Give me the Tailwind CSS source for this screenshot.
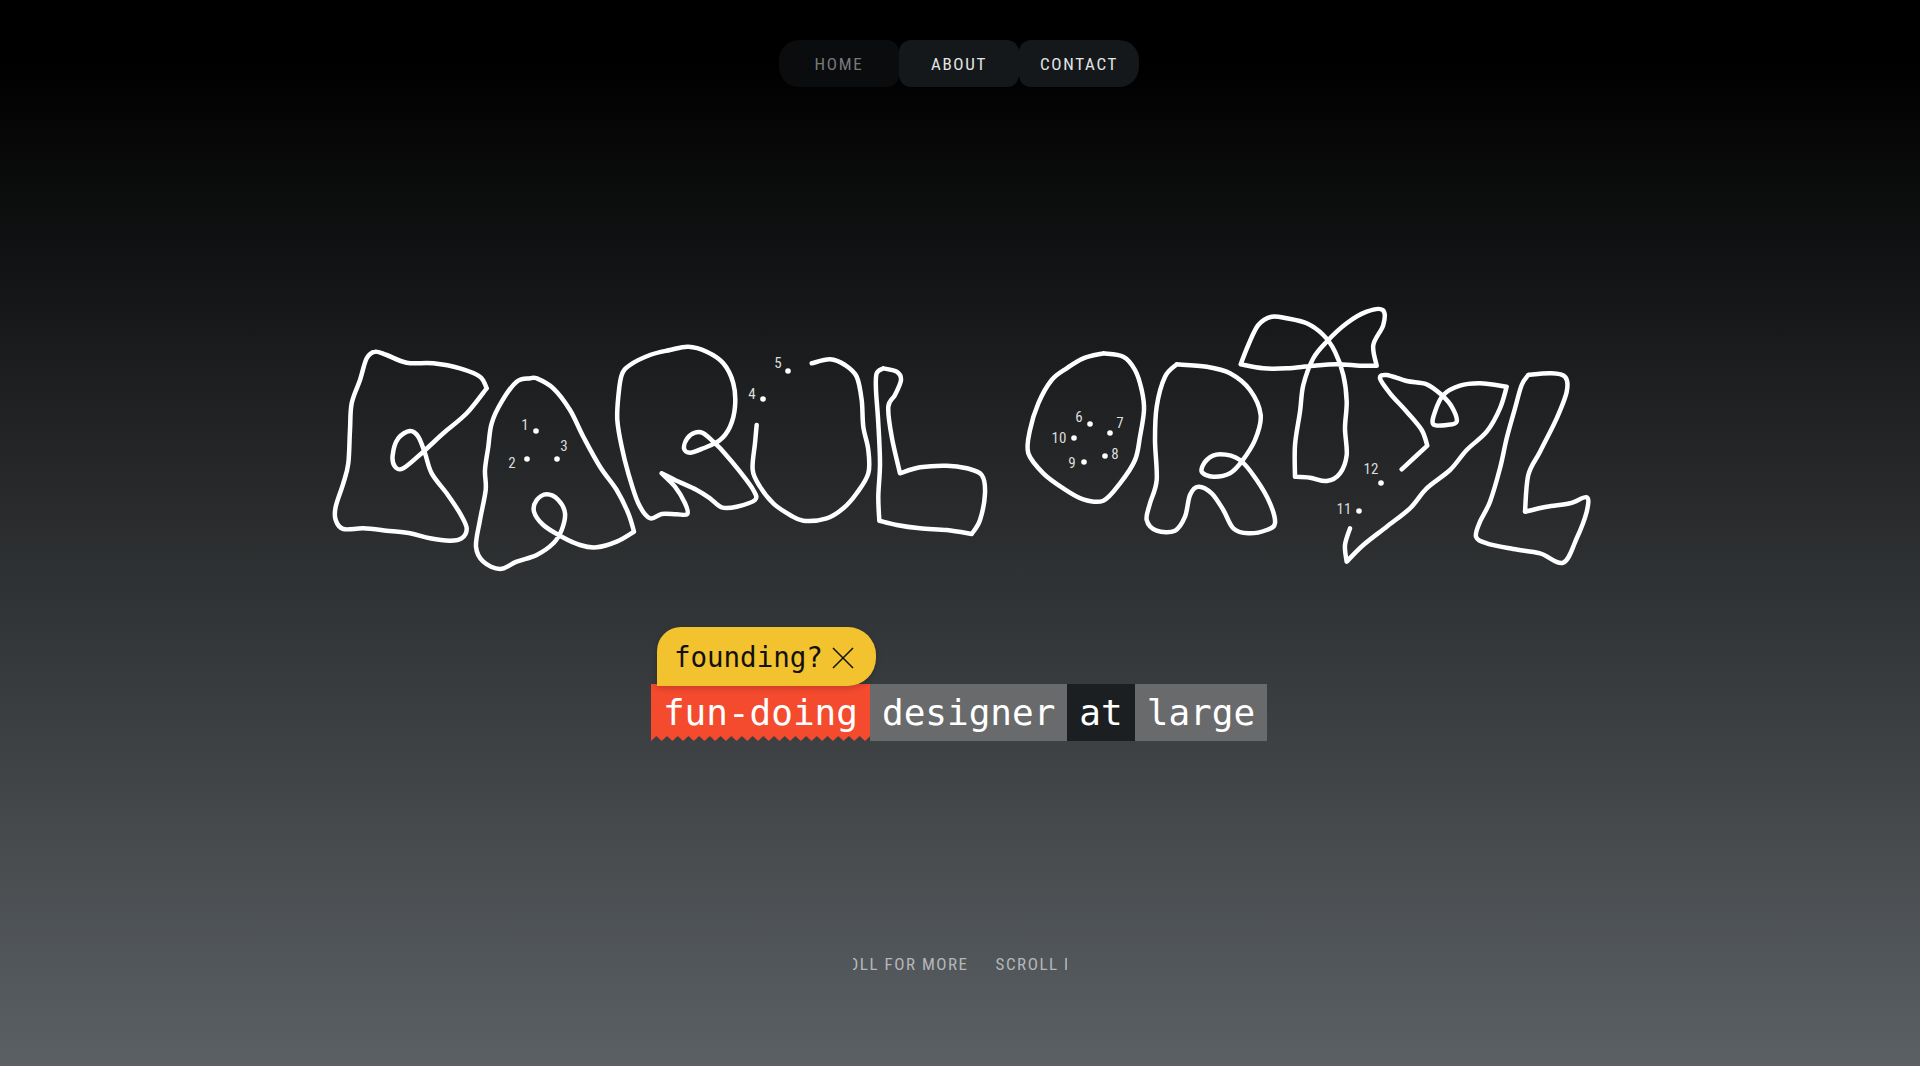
<!DOCTYPE html>
<html lang="en">
<head>
    <meta charset="UTF-8">
    <title>Karol Ortyl</title>
    <script src="https://cdn.jsdelivr.net/npm/@tailwindcss/browser@4"></script>
</head>
<body class="bg-black">
    <div class="relative h-[1066px] overflow-hidden bg-[linear-gradient(to_bottom,#000_6%,#5b6064_100%)] font-['Roboto',sans-serif]">
        <!-- nav -->
        <nav class="flex justify-center pr-[2px] pt-10 text-[17px] tracking-[0.1em] [font-stretch:75%]">
            <a class="flex h-[47px] w-[120px] items-center justify-center rounded-l-[20px] rounded-r-[12px] bg-[#0a0c0e] pt-[2px] text-[#77797b]">HOME</a>
            <a class="flex h-[47px] w-[120px] items-center justify-center rounded-[12px] bg-[#14181a] pt-[2px] text-[#e4e5e6]">ABOUT</a>
            <a class="flex h-[47px] w-[120px] items-center justify-center rounded-l-[12px] rounded-r-[20px] bg-[#14181a] pt-[2px] text-[#e4e5e6]">CONTACT</a>
        </nav>

        <!-- hand drawn name -->
        <svg id="signature" class="absolute left-0 top-0" width="1920" height="1066" fill="none"></svg>

        <!-- tagline -->
        <div class="absolute left-0 right-0 top-[627px] flex justify-center pr-[2px] font-['DejaVu_Sans_Mono',monospace]">
            <div class="relative pt-[57px]">
                <div class="absolute left-[6px] top-0 z-10 flex h-[59px] w-[219px] items-center gap-[9px] rounded-tl-[24px] rounded-r-[28px] bg-[#f3c22f] pl-[17px] pt-[2px] text-[27.5px] text-[#111] shadow-[0_2px_6px_rgba(0,0,0,0.2)]">
                    <span>founding?</span>
                    <svg width="22" height="22" viewBox="0 0 22 22" fill="none" stroke="#111" stroke-width="1.5"><path d="M1 1 21 21M21 1 1 21"/></svg>
                </div>
                <div class="flex text-[36px] leading-[57px] text-white">
                    <span class="relative bg-[#f44a2e] px-3">fun-doing
                        <svg class="absolute bottom-0 left-0 h-[5px] w-full" fill="none">
                            <pattern id="teeth" width="10.7" height="5" patternUnits="userSpaceOnUse"><path d="M0 5 5.35 0 10.7 5Z" fill="#3b3f42"/></pattern>
                            <rect width="100%" height="5" fill="url(#teeth)"/>
                        </svg>
                    </span>
                    <span class="bg-[#696a6b] px-3">designer</span>
                    <span class="bg-[#1c1f22] px-3">at</span>
                    <span class="bg-[#696a6b] px-3">large</span>
                </div>
            </div>
        </div>

        <!-- ticker -->
        <div class="absolute left-[853px] top-[954px] w-[214px] overflow-hidden text-[17px] leading-5 tracking-[0.09em] text-[#b4b7b9] [font-stretch:75%]">
            <div class="ml-[-37px] flex w-max gap-[27px] whitespace-nowrap">
                <span>SCROLL FOR MORE</span>
                <span>SCROLL FOR MORE</span>
            </div>
        </div>
    </div>

    <script>
        const NS = 'http://www.w3.org/2000/svg';
        const svg = document.getElementById('signature');

        // strokes traced from the drawing: [originX, originY, points at 3x]
        // a point written twice makes a hard corner
        const strokes = [
            [320, 330, [500,175,440,250,370,310,310,365,250,415,225,410,218,375,235,325,270,303,295,320,315,370,335,430,380,490,420,550,440,595,425,625,390,632,330,625,270,610,200,602,130,595,70,597,47,570,47,530,70,460,85,400,90,300,95,220,120,150,140,85,165,65,200,75,260,98,340,100,420,115,480,140,500,175]],
            [320, 330, [630,145,590,155,545,215,515,280,505,350,495,420,497,480,480,570,468,650,490,695,540,717,590,695,650,675,700,640,725,600,735,550,715,510,680,493,650,510,642,545,670,585,725,620,780,645,830,652,890,635,942,605,942,605,925,550,890,480,840,410,790,320,750,240,700,175,650,145,630,145]],
            [600, 330, [185,430,225,450,290,480,330,505,365,532,410,530,465,510,460,480,420,425,370,365,345,340,310,310,285,308,262,325,252,355,270,368,310,355,360,330,390,290,405,230,400,160,370,100,320,65,265,50,210,60,150,75,90,105,65,135,55,200,52,270,65,350,85,430,115,520,150,565,185,552,230,553,262,552,255,520,225,470,185,430]],
            [600, 330, [470,285,465,340,458,420,480,470,520,520,570,555,610,572,680,565,730,535,770,490,805,430,805,360,790,290,785,210,770,140,735,105,690,88,635,100]],
            [600, 330, [850,115,890,125,903,150,885,195,865,230,875,320,900,430,900,430,960,412,1040,407,1100,415,1145,435,1155,490,1140,570,1115,612,1115,612,1040,600,960,595,890,585,838,572,838,572,835,500,840,400,835,280,828,180,830,130,850,115]],
            [1010, 340, [280,40,340,50,375,90,395,150,402,210,390,290,375,360,330,430,280,482,220,478,160,445,100,400,55,340,60,270,85,190,125,120,170,85,220,55,280,40]],
            [1010, 340, [500,73,590,80,660,100,720,150,752,225,735,300,695,365,660,400,610,410,575,395,590,360,630,343,690,360,740,420,780,490,795,550,770,570,715,580,670,565,640,510,605,460,565,440,540,465,525,530,495,572,440,572,410,540,420,490,440,420,435,300,440,200,465,110,500,73]],
            [1220, 295, [470,212,460,150,490,90,488,45,440,50,380,85,320,140,280,190,250,270,240,350,225,450,225,545,225,545,270,548,320,558,360,535,380,480,375,400,380,320,370,240,345,170,310,120,260,85,200,70,155,65,115,90,85,150,62,208,62,208,130,220,200,220,280,212,350,208,420,212,470,212]],
            [1220, 295, [545,523,622,452,622,452,605,405,560,350,510,295,480,250,500,240,560,258,620,268,665,300,695,335,710,380,680,390,640,388,645,350,670,300,720,272,780,265,860,275,860,275,840,340,800,410,740,465,690,525,620,580,570,640,500,695,430,750,380,800,380,800,375,750,390,700]],
            [1220, 295, [925,240,990,235,1035,245,1040,290,1010,370,960,470,925,540,915,650,915,650,980,635,1050,625,1100,607,1100,650,1070,730,1030,803,960,775,880,762,800,745,768,725,780,680,810,620,840,520,860,430,885,340,905,270,925,240]]
        ];

        // catmull-rom through the traced points
        function smooth(pts) {
            let d = `M${pts[0].x} ${pts[0].y}`;
            for (let i = 0; i < pts.length - 1; i++) {
                const p0 = pts[i - 1] || pts[i], p1 = pts[i], p2 = pts[i + 1], p3 = pts[i + 2] || p2;
                if (p1.x === p2.x && p1.y === p2.y) continue;
                const c1x = p1.x + (p2.x - p0.x) / 6, c1y = p1.y + (p2.y - p0.y) / 6;
                const c2x = p2.x - (p3.x - p1.x) / 6, c2y = p2.y - (p3.y - p1.y) / 6;
                d += `C${c1x.toFixed(1)} ${c1y.toFixed(1)} ${c2x.toFixed(1)} ${c2y.toFixed(1)} ${p2.x.toFixed(1)} ${p2.y.toFixed(1)}`;
            }
            return d;
        }

        strokes.forEach(([ox, oy, raw]) => {
            const pts = [];
            for (let i = 0; i < raw.length; i += 2) pts.push({ x: ox + raw[i] / 3, y: oy + raw[i + 1] / 3 });
            const path = document.createElementNS(NS, 'path');
            path.setAttribute('d', smooth(pts));
            path.setAttribute('stroke', '#fff');
            path.setAttribute('stroke-width', '4.5');
            path.setAttribute('stroke-linecap', 'round');
            path.setAttribute('stroke-linejoin', 'round');
            svg.appendChild(path);
        });

        // numbered dots: [label, dotX, dotY, labelX, labelY]
        const dots = [
            ['1', 536, 431, 525, 424], ['2', 527, 459, 512, 462], ['3', 557, 459, 564, 445],
            ['4', 763, 399, 752, 393], ['5', 788, 371, 778, 362], ['6', 1090, 424, 1079, 416],
            ['7', 1110, 433, 1120, 422], ['8', 1105, 456, 1115, 453], ['9', 1084, 462, 1072, 462],
            ['10', 1074, 438, 1059, 437], ['11', 1359, 511, 1344, 508], ['12', 1381, 483, 1371, 468]
        ];
        dots.forEach(([label, dx, dy, lx, ly]) => {
            const c = document.createElementNS(NS, 'circle');
            c.setAttribute('cx', dx); c.setAttribute('cy', dy); c.setAttribute('r', '2.8');
            c.setAttribute('fill', '#fff');
            svg.appendChild(c);
            const t = document.createElementNS(NS, 'text');
            t.textContent = label;
            t.setAttribute('x', lx); t.setAttribute('y', ly + 5.5);
            t.setAttribute('text-anchor', 'middle');
            t.setAttribute('fill', '#dcdddd');
            t.setAttribute('font-size', '15');
            t.setAttribute('font-stretch', '75%');
            t.setAttribute('font-family', 'Roboto, sans-serif');
            svg.appendChild(t);
        });
    </script>
</body>
</html>
